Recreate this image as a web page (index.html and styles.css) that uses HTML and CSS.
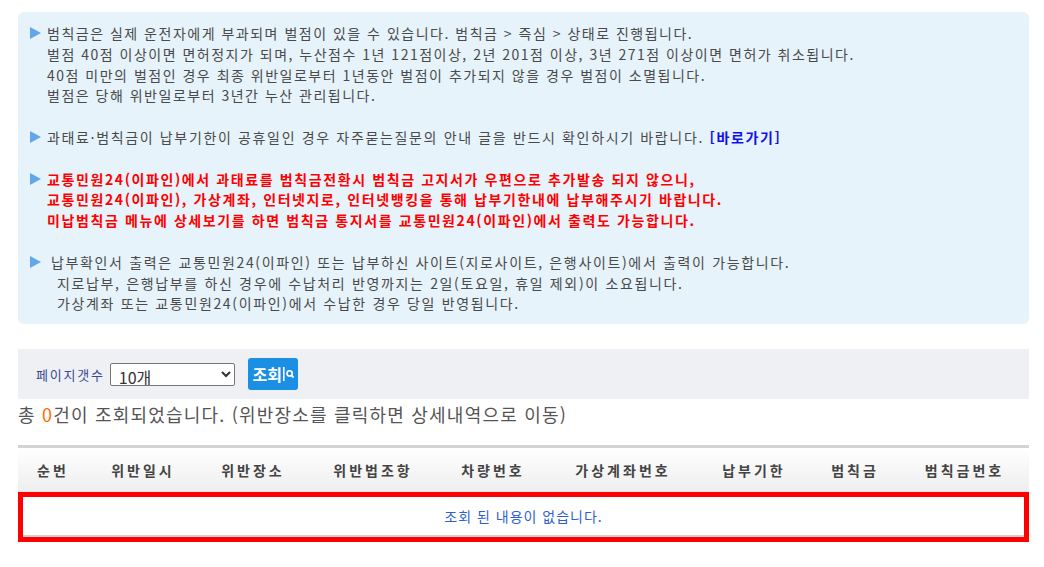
FILE: index.html
```html
<!DOCTYPE html>
<html lang="ko">
<head>
  <meta charset="UTF-8">
  <title>범칙금 조회</title>
  <link rel="stylesheet" href="styles.css">
</head>
<body>
  <div class="wrap">
    <div class="notice">
      <div class="item first">
        <span class="bullet"><svg width="11" height="12" viewBox="0 0 11 12"><polygon points="0,0 11,6 0,12" fill="#62a8e8"/></svg></span>
        <p>범칙금은 실제 운전자에게 부과되며 벌점이 있을 수 있습니다. 범칙금 &gt; 즉심 &gt; 상태로 진행됩니다.<br>
        벌점 40점 이상이면 면허정지가 되며, 누산점수 1년 121점이상, 2년 201점 이상, 3년 271점 이상이면 면허가 취소됩니다.<br>
        40점 미만의 벌점인 경우 최종 위반일로부터 1년동안 벌점이 추가되지 않을 경우 벌점이 소멸됩니다.<br>
        벌점은 당해 위반일로부터 3년간 누산 관리됩니다.</p>
      </div>
      <div class="item">
        <span class="bullet"><svg width="11" height="12" viewBox="0 0 11 12"><polygon points="0,0 11,6 0,12" fill="#62a8e8"/></svg></span>
        <p>과태료·범칙금이 납부기한이 공휴일인 경우 자주묻는질문의 안내 글을 반드시 확인하시기 바랍니다. <a href="#" class="go">[바로가기]</a></p>
      </div>
      <div class="item">
        <span class="bullet"><svg width="11" height="12" viewBox="0 0 11 12"><polygon points="0,0 11,6 0,12" fill="#62a8e8"/></svg></span>
        <p class="warn">교통민원24(이파인)에서 과태료를 범칙금전환시 범칙금 고지서가 우편으로 추가발송 되지 않으니,<br>
        교통민원24(이파인), 가상계좌, 인터넷지로, 인터넷뱅킹을 통해 납부기한내에 납부해주시기 바랍니다.<br>
        미납범칙금 메뉴에 상세보기를 하면 범칙금 통지서를 교통민원24(이파인)에서 출력도 가능합니다.</p>
      </div>
      <div class="item last">
        <span class="bullet"><svg width="11" height="12" viewBox="0 0 11 12"><polygon points="0,0 11,6 0,12" fill="#62a8e8"/></svg></span>
        <p>납부확인서 출력은 교통민원24(이파인) 또는 납부하신 사이트(지로사이트, 은행사이트)에서 출력이 가능합니다.<br>
        지로납부, 은행납부를 하신 경우에 수납처리 반영까지는 2일(토요일, 휴일 제외)이 소요됩니다.<br>
        가상계좌 또는 교통민원24(이파인)에서 수납한 경우 당일 반영됩니다.</p>
      </div>
    </div>

    <form class="search" onsubmit="return false">
      <label for="pageSize">페이지갯수</label>
      <select id="pageSize">
        <option>10개</option>
        <option>20개</option>
        <option>50개</option>
      </select>
      <button type="submit" class="btn-search">조회<svg width="12" height="16" viewBox="0 0 12 16"><rect x="0" y="1" width="1.6" height="14" fill="#fff"/><circle cx="6.6" cy="7.4" r="2.6" fill="none" stroke="#fff" stroke-width="1.6"/><line x1="8.4" y1="9.3" x2="10.6" y2="11.5" stroke="#fff" stroke-width="1.8"/></svg></button>
    </form>

    <p class="total">총 <em>0</em>건이 조회되었습니다. (위반장소를 클릭하면 상세내역으로 이동)</p>

    <table class="list">
      <colgroup>
        <col style="width:70px"><col style="width:110px"><col style="width:110px"><col style="width:130px"><col style="width:110px"><col style="width:150px"><col style="width:112px"><col style="width:90px"><col style="width:129px">
      </colgroup>
      <thead>
        <tr>
          <th>순번</th><th>위반일시</th><th>위반장소</th><th>위반법조항</th><th>차량번호</th><th>가상계좌번호</th><th>납부기한</th><th>범칙금</th><th>범칙금번호</th>
        </tr>
      </thead>
      <tbody>
        <tr class="empty"><td colspan="9">조회 된 내용이 없습니다.</td></tr>
      </tbody>
    </table>
  </div>
</body>
</html>
```

FILE: styles.css
```css
body { margin:0; background:#fff; font-family:"Noto Sans CJK KR", "Noto Sans", sans-serif; color:#4a4a4a; }
.wrap { width:1011px; padding:12px 0 0 18px; }

/* 안내 박스 */
.notice { background:#e6f3fa; border-radius:6px; padding:11px 12px 10px 12px; font-size:14px; line-height:20.8px; letter-spacing:1.65px; }
.item { display:flex; align-items:flex-start; margin-bottom:20.8px; }
.item.first { letter-spacing:1.5px; }
.item.last { margin-bottom:0; }
.bullet { flex:none; width:17px; padding-top:4px; line-height:0; }
.item p { margin:0; white-space:nowrap; }
.item.last .bullet { width:21px; }
.item.last p { padding-left:6px; text-indent:-6px; }
.warn { color:#ff0000; font-weight:bold; letter-spacing:1.6px; }
.go { color:#1010ee; font-weight:bold; text-decoration:none; }

/* 검색 */
.search { margin-top:25px; height:50px; background:#eef0f3; display:flex; align-items:center; padding-left:18px; }
.search label { font-size:13px; color:#3b4a96; letter-spacing:1.8px; margin-right:5px; }
.search select { width:125px; height:23px; font-family:"Noto Sans CJK KR", sans-serif; font-size:16px; color:#333; border:1px solid #767676; border-radius:2px; background:#fff; padding:0 4px; }
.btn-search { margin-left:13px; height:32px; width:50px; background:#1a8fe3; border:none; border-radius:3px; color:#fff; font-family:"Noto Sans CJK KR", sans-serif; font-size:16px; font-weight:bold; display:flex; align-items:center; justify-content:center; padding:0 2px 0 4px; gap:1px; cursor:pointer; }

.total { margin:2px 0 0; font-size:18px; letter-spacing:1.2px; color:#555; line-height:26px; }
.total em { font-style:normal; color:#ff6a00; }

/* 목록 */
.list { margin-top:18px; width:1011px; border-collapse:separate; border-spacing:0; table-layout:fixed; border-top:3px solid #d3d3d3; }
.list th { height:43px; font-size:14px; font-weight:bold; color:#444; letter-spacing:3px; background:linear-gradient(#fff, #eeeeee); border-bottom:1px solid #e2e2e2; padding:0; }
.empty td { border:5px solid #ff0000; height:38px; text-align:center; font-size:14px; letter-spacing:1px; color:#2f5fcf; box-shadow:inset 0 -2px 0 #cfcfcf; padding:0 0 2px; }
```
